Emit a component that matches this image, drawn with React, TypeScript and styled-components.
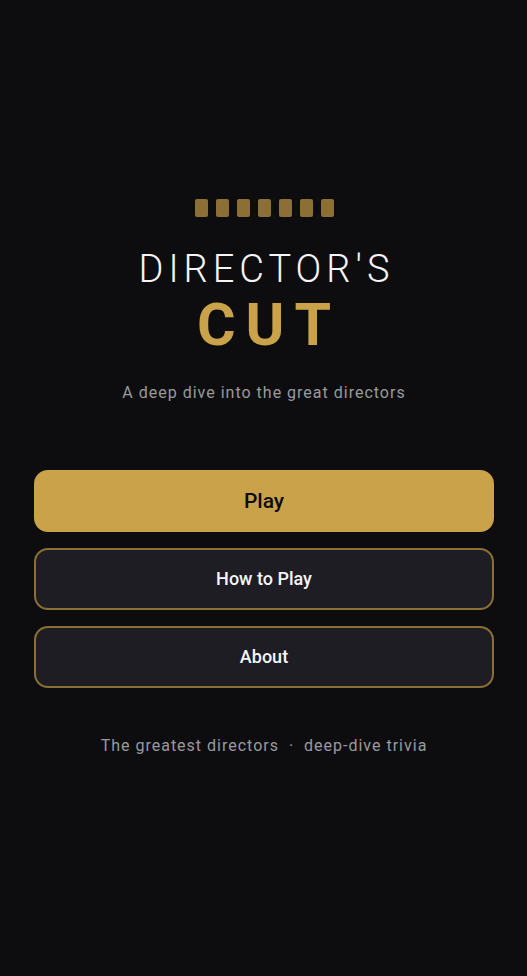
import { type ReactNode } from 'react'
import styled, { createGlobalStyle } from 'styled-components'

const theme = {
  bg: '#0d0d0f',
  surface: '#1e1d24',
  gold: '#c9a24a',
  goldDim: '#8b6f34',
  text: '#f5f5f5',
  textMuted: '#9a9a9e',
}

const PERFORATIONS = [0, 1, 2, 3, 4, 5, 6]

const App = (): ReactNode => (
  <>
    <GlobalStyle />
    <Screen>
      <FilmStrip aria-hidden="true">
        {PERFORATIONS.map((n) => (
          <Perforation key={n} />
        ))}
      </FilmStrip>
      <Title>
        <TitleTop>DIRECTOR'S</TitleTop>
        <TitleBottom>CUT</TitleBottom>
      </Title>
      <Tagline>A deep dive into the great directors</Tagline>
      <Menu>
        <MenuButton type="button" $primary>Play</MenuButton>
        <MenuButton type="button">How to Play</MenuButton>
        <MenuButton type="button">About</MenuButton>
      </Menu>
      <Footer>The greatest directors  ·  deep-dive trivia</Footer>
    </Screen>
  </>
)

export default App

const GlobalStyle = createGlobalStyle`
  * {
    box-sizing: border-box;
  }

  body {
    margin: 0;
    background: ${theme.bg};
    color: ${theme.text};
    font-family: Roboto, 'Liberation Sans', sans-serif;
  }
`

const Screen = styled.main`
  display: flex;
  flex-direction: column;
  align-items: center;
  justify-content: center;
  min-height: 100vh;
  padding: 24px 33px 44px 34px;
`

const FilmStrip = styled.div`
  display: flex;
  gap: 8px;
  margin-bottom: 28px;
`

const Perforation = styled.span`
  width: 13px;
  height: 18px;
  border-radius: 2px;
  background: ${theme.goldDim};
`

const Title = styled.h1`
  display: flex;
  flex-direction: column;
  align-items: center;
  margin: 0 0 24px;
`

/* left padding balances the spacing after the last letter */
const TitleTop = styled.span`
  padding-left: 5px;
  font-size: 38px;
  font-weight: 300;
  line-height: 48px;
  letter-spacing: 5px;
`

const TitleBottom = styled.span`
  padding-left: 10px;
  font-size: 59px;
  font-weight: 700;
  line-height: 64px;
  letter-spacing: 10px;
  color: ${theme.gold};
`

const Tagline = styled.p`
  margin: 0 0 65px;
  font-size: 16px;
  line-height: 24px;
  letter-spacing: 1px;
  color: ${theme.textMuted};
`

const Menu = styled.nav`
  display: flex;
  flex-direction: column;
  gap: 16px;
  width: 100%;
  margin-bottom: 46px;
`

const MenuButton = styled.button<{ $primary?: boolean }>`
  width: 100%;
  height: 62px;
  border: 2px solid ${(p) => (p.$primary ? theme.gold : theme.goldDim)};
  border-radius: 14px;
  background: ${(p) => (p.$primary ? theme.gold : theme.surface)};
  color: ${(p) => (p.$primary ? theme.bg : theme.text)};
  font-family: inherit;
  font-size: ${(p) => (p.$primary ? 21 : 18)}px;
  font-weight: 500;
  cursor: pointer;
`

const Footer = styled.footer`
  font-size: 16px;
  line-height: 24px;
  letter-spacing: 1px;
  white-space: pre;
  color: ${theme.textMuted};
`
